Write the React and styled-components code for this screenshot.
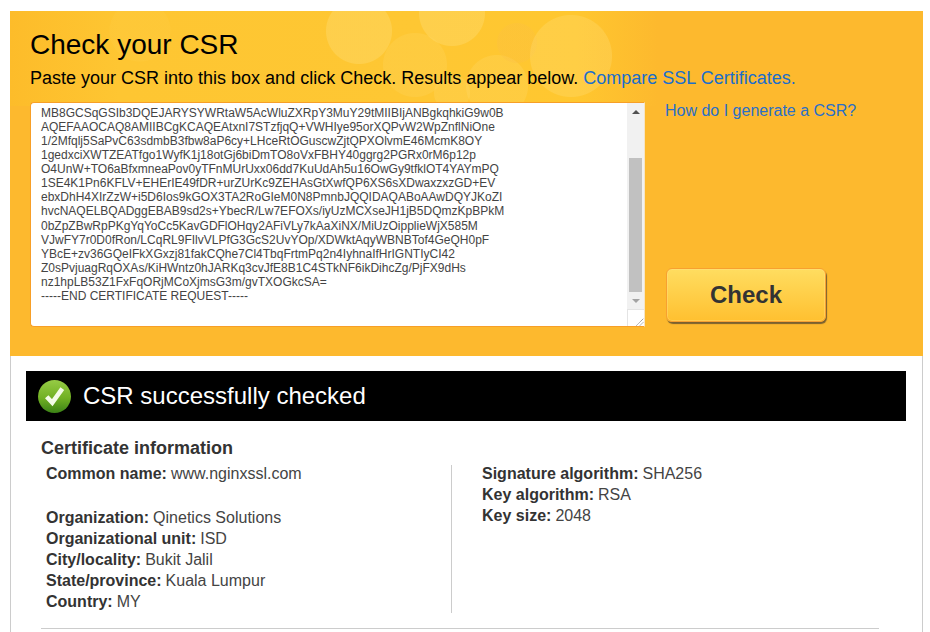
import React from 'react';
import styled, { createGlobalStyle } from 'styled-components';

const GlobalStyle = createGlobalStyle`
  html, body { margin: 0; padding: 0; background: #fff; overflow: hidden; }
  body { font-family: "Liberation Sans", Arial, sans-serif; color: #333; }
  * { box-sizing: border-box; }
`;

const Page = styled.div`
  width: 913px;
  margin: 11px 0 0 10px;
`;

const Hero = styled.section`
  height: 345px;
  padding: 16px 20px 0;
  background-color: #fdb92e;
  background-image:
    radial-gradient(circle at 561px 45px, rgba(255,222,120,.30) 40.5px, transparent 41.5px),
    radial-gradient(circle at 507px 32px, rgba(250,190,70,.30) 19.5px, transparent 20.5px),
    radial-gradient(circle at 349px 20px, rgba(255,222,120,.36) 32.5px, transparent 33.5px),
    radial-gradient(circle at 442px 2px, rgba(255,222,120,.36) 32.5px, transparent 33.5px),
    radial-gradient(circle at 405px 54px, rgba(255,222,120,.18) 31.5px, transparent 32.5px),
    radial-gradient(circle at 487px 75px, rgba(255,222,120,.22) 30.5px, transparent 31.5px),
    radial-gradient(circle at 442px 82px, rgba(255,222,120,.22) 17.5px, transparent 18.5px),
    radial-gradient(circle at 130px 20px, rgba(255,222,120,.08) 30px, transparent 31px),
    linear-gradient(90deg, #fdbc2a 0%, #fec632 12%, #fec733 45%, #ffc72f 62%, #fdb92e 71%, #fdb92e 100%);
  background-size: 100% 100%, 100% 100%, 100% 100%, 100% 100%, 100% 100%, 100% 100%, 100% 100%, 100% 100%, 100% 95px;
  background-repeat: no-repeat;
`;

const Title = styled.h1`
  margin: 0;
  font-size: 28px;
  line-height: 36px;
  font-weight: 400;
  color: #000;
`;

const Lead = styled.p`
  margin: 5px 0 0;
  font-size: 18px;
  line-height: 20px;
  color: #000;
`;

const TextLink = styled.a`
  color: #1a6ecb;
  text-decoration: none;
`;

const FormRow = styled.div`
  display: flex;
  margin-top: 14px;
  height: 225px;
`;

const CsrBox = styled.div`
  display: flex;
  width: 615px;
  background: #fff;
  border: 1px solid #f79f27;
  border-right-color: #f6e4c4;
  border-radius: 4px 0 0 4px;
  overflow: hidden;
`;

const CsrText = styled.pre`
  flex: 1;
  margin: 0;
  padding: 3px 0 0 10px;
  overflow: hidden;
  font-family: "Liberation Sans", Arial, sans-serif;
  font-size: 12px;
  line-height: 14.07px;
  color: #444;
`;

const Scrollbar = styled.div`
  display: flex;
  flex-direction: column;
  width: 17px;
  background: #f1f1f1;
`;

const ScrollButton = styled.div`
  flex: none;
  height: 17px;
  display: flex;
  align-items: center;
  justify-content: center;
`;

const Arrow = styled.span`
  width: 0;
  height: 0;
  border-left: 4px solid transparent;
  border-right: 4px solid transparent;
  ${(p) => (p.$down ? 'border-top: 4px solid #a3a3a3;' : 'border-bottom: 4px solid #505050;')}
`;

const ScrollTrack = styled.div`
  flex: 1;
  padding: 38px 2px 0;
`;

const ScrollThumb = styled.div`
  height: 134px;
  background: #c1c1c1;
`;

const Resizer = styled.div`
  flex: none;
  height: 17px;
  background: #fff;
  border-top: 1px solid #e4e4e4;
  border-left: 1px solid #e4e4e4;
  display: flex;
  align-items: flex-end;
  justify-content: flex-end;
`;

const Aside = styled.div`
  flex: 1;
  display: flex;
  flex-direction: column;
  justify-content: space-between;
  align-items: flex-start;
  padding: 0 0 5px 20px;
  font-size: 16px;
  line-height: 18px;
`;

const HelpLink = styled(TextLink)`
  color: #2a6fc8;
`;

const CheckButton = styled.button`
  width: 160px;
  height: 54px;
  margin-left: 1px;
  border: 1px solid #f8a030;
  border-radius: 6px;
  background: linear-gradient(180deg, #ffdd60 0%, #ffc030 100%);
  box-shadow: 1px 2px 1px #7a6030, inset 0 0 0 1px rgba(255,230,140,.35);
  font-family: "Liberation Sans", Arial, sans-serif;
  font-size: 24px;
  font-weight: 700;
  color: #333;
`;

const Results = styled.section`
  height: 276px;
  width: 913px;
  padding: 15px 15px 0;
  border-left: 1px solid #ccc;
  border-right: 1px solid #ccc;
`;

const Banner = styled.div`
  display: flex;
  align-items: center;
  gap: 12px;
  height: 50px;
  width: 880px;
  padding-left: 12px;
  background: #000;
  color: #fff;
  font-size: 24px;
`;

const SectionTitle = styled.h2`
  margin: 17px 0 0 15px;
  font-size: 18px;
  line-height: 20px;
  font-weight: 700;
  color: #333;
`;

const InfoGrid = styled.div`
  display: grid;
  grid-template-columns: 410px 1px 1fr;
  margin: 5px 0 0 15px;
  padding-bottom: 16px;
  width: 838px;
  height: 166px;
  border-bottom: 1px solid #ccc;
`;

const InfoColumn = styled.dl`
  margin: 0;
  padding-left: ${(p) => p.$pad}px;
  font-size: 16px;
  line-height: 21px;
`;

const ColumnRule = styled.div`
  align-self: end;
  height: 148px;
  background: #ccc;
  margin-bottom: -1px;
`;

const InfoRow = styled.div`
  margin-bottom: ${(p) => (p.$gap ? 23 : 0)}px;
`;

const Label = styled.dt`
  display: inline;
  font-weight: 700;
  color: #333;
`;

const Value = styled.dd`
  display: inline;
  margin: 0 0 0 4px;
  color: #444;
`;

const csrLines = `MB8GCSqGSIb3DQEJARYSYWRtaW5AcWluZXRpY3MuY29tMIIBIjANBgkqhkiG9w0B
AQEFAAOCAQ8AMIIBCgKCAQEAtxnI7STzfjqQ+VWHIye95orXQPvW2WpZnflNiOne
1/2Mfqlj5SaPvC63sdmbB3fbw8aP6cy+LHceRtOGuscwZjtQPXOlvmE46McmK8OY
1gedxciXWTZEATfgo1WyfK1j18otGj6biDmTO8oVxFBHY40ggrg2PGRx0rM6p12p
O4UnW+TO6aBfxmneaPov0yTFnMUrUxx06dd7KuUdAh5u16OwGy9tfklOT4YAYmPQ
1SE4K1Pn6KFLV+EHErIE49fDR+urZUrKc9ZEHAsGtXwfQP6XS6sXDwaxzxzGD+EV
ebxDhH4XIrZzW+i5D6Ios9kGOX3TA2RoGIeM0N8PmnbJQQIDAQABoAAwDQYJKoZI
hvcNAQELBQADggEBAB9sd2s+YbecR/Lw7EFOXs/iyUzMCXseJH1jB5DQmzKpBPkM
0bZpZBwRpPKgYqYoCc5KavGDFlOHqy2AFiVLy7kAaXiNX/MiUzOipplieWjX585M
VJwFY7r0D0fRon/LCqRL9FIlvVLPfG3GcS2UvYOp/XDWktAqyWBNBTof4GeQH0pF
YBcE+zv36GQeIFkXGxzj81fakCQhe7Cl4TbqFrtmPq2n4IyhnaIfHrIGNTIyCI42
Z0sPvjuagRqOXAs/KiHWntz0hJARKq3cvJfE8B1C4STkNF6ikDihcZg/PjFX9dHs
nz1hpLB53Z1FxFqORjMCoXjmsG3m/gvTXOGkcSA=
-----END CERTIFICATE REQUEST-----`;

const leftInfo = [
  ['Common name:', 'www.nginxssl.com', true],
  ['Organization:', 'Qinetics Solutions'],
  ['Organizational unit:', 'ISD'],
  ['City/locality:', 'Bukit Jalil'],
  ['State/province:', 'Kuala Lumpur'],
  ['Country:', 'MY'],
];

const rightInfo = [
  ['Signature algorithm:', 'SHA256'],
  ['Key algorithm:', 'RSA'],
  ['Key size:', '2048'],
];

const SuccessIcon = () => (
  <svg width="33" height="33" viewBox="0 0 33 33">
    <defs>
      <linearGradient id="okFill" x1="0" y1="0" x2="0" y2="1">
        <stop offset="0" stopColor="#96cb45" />
        <stop offset="0.55" stopColor="#71b023" />
        <stop offset="1" stopColor="#3b8216" />
      </linearGradient>
    </defs>
    <circle cx="16.5" cy="16.5" r="16.5" fill="url(#okFill)" />
    <path d="M8.7 16.7l5.6 6L24.3 8.7" fill="none" stroke="#f4fbe8" strokeWidth="4.6" />
  </svg>
);

const GripIcon = () => (
  <svg width="8" height="8" viewBox="0 0 8 8">
    <path d="M0.5 7.5L7.5 0.5M4 7.5L7.5 4" stroke="#777" strokeWidth="1" strokeDasharray="1 0.6" fill="none" />
  </svg>
);

const InfoList = ({ rows, ...rest }) => (
  <InfoColumn {...rest}>
    {rows.map(([label, value, gap]) => (
      <InfoRow key={label} $gap={gap}>
        <Label>{label}</Label>
        <Value>{value}</Value>
      </InfoRow>
    ))}
  </InfoColumn>
);

export default function App() {
  return (
    <Page>
      <GlobalStyle />
      <Hero>
        <Title>Check your CSR</Title>
        <Lead>
          Paste your CSR into this box and click Check. Results appear below.{' '}
          <TextLink href="#">Compare SSL Certificates.</TextLink>
        </Lead>
        <FormRow>
          <CsrBox>
            <CsrText>{csrLines}</CsrText>
            <Scrollbar>
              <ScrollButton><Arrow /></ScrollButton>
              <ScrollTrack><ScrollThumb /></ScrollTrack>
              <ScrollButton><Arrow $down /></ScrollButton>
              <Resizer><GripIcon /></Resizer>
            </Scrollbar>
          </CsrBox>
          <Aside>
            <HelpLink href="#">How do I generate a CSR?</HelpLink>
            <CheckButton type="button">Check</CheckButton>
          </Aside>
        </FormRow>
      </Hero>
      <Results>
        <Banner>
          <SuccessIcon />
          CSR successfully checked
        </Banner>
        <SectionTitle>Certificate information</SectionTitle>
        <InfoGrid>
          <InfoList rows={leftInfo} $pad={5} />
          <ColumnRule />
          <InfoList rows={rightInfo} $pad={30} />
        </InfoGrid>
      </Results>
    </Page>
  );
}
